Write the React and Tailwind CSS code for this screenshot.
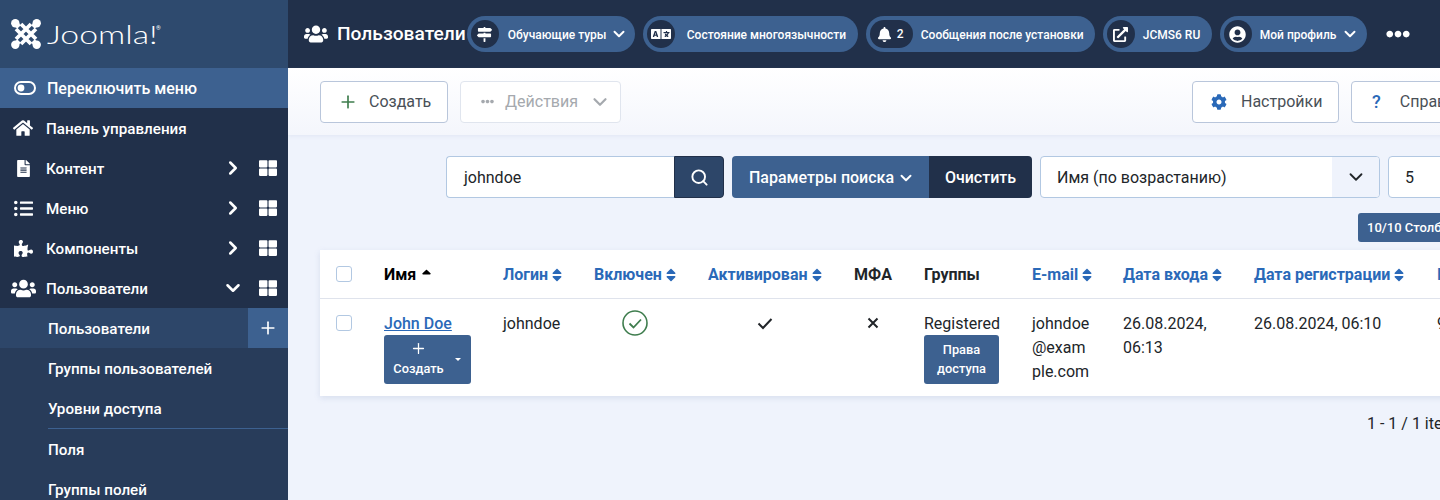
import { ChevronDown, ChevronRight, Plus, Search } from "lucide-react";
import {
  FaBell,
  FaCog,
  FaEllipsisH,
  FaExternalLinkAlt,
  FaFileAlt,
  FaHome,
  FaLanguage,
  FaListUl,
  FaMapSigns,
  FaPuzzlePiece,
  FaSort,
  FaSortUp,
  FaThLarge,
  FaUserCircle,
  FaUsers,
} from "react-icons/fa";

function JoomlaLogo() {
  return (
    <div className="flex items-center h-[68px] shrink-0 pl-[11px] bg-[#2e4a6e]">
      <svg width="30" height="30" viewBox="0 0 30 30" fill="none" stroke="white" strokeWidth="3.8">
        <path d="M10 5 L25 20 M5 10 L20 25 M20 5 L5 20 M25 10 L10 25" />
        <path d="M4 4 L8 8 M26 4 L22 8 M4 26 L8 22 M26 26 L22 22" strokeWidth="5" />
        <g fill="white" stroke="none">
          <circle cx="4.3" cy="4.3" r="4.2" />
          <circle cx="25.7" cy="4.3" r="4.2" />
          <circle cx="4.3" cy="25.7" r="4.2" />
          <circle cx="25.7" cy="25.7" r="4.2" />
        </g>
      </svg>
      <span className="block w-[108px] ml-[6px] origin-left scale-x-[1.3] font-[family-name:Lato] font-light text-[26px] leading-none text-white">
        Joomla!
      </span>
      <span className="self-start mt-[25px] ml-[1px] text-[6px] leading-none text-white">®</span>
    </div>
  );
}

function NavRow({ icon, label, open, more }) {
  return (
    <div className="flex items-center h-10 shrink-0 pl-[13px] pr-[11px] text-white text-[15.2px] font-medium bg-[#21304a]">
      <span className="flex justify-center w-5 mr-[13px] text-[19px]">{icon}</span>
      <span className="pt-[2px]">{label}</span>
      {more && (
        <>
          <span className="ml-auto mr-[15px]">
            {open ? (
              <ChevronDown size={22} strokeWidth={2.8} />
            ) : (
              <ChevronRight size={22} strokeWidth={2.8} />
            )}
          </span>
          <FaThLarge size={18} />
        </>
      )}
    </div>
  );
}

function SubRow({ label, active }) {
  return (
    <div className={active ? "flex items-center h-10 shrink-0 pl-12 bg-[#2d4669] text-white text-[15.2px] font-medium" : "flex items-center h-10 shrink-0 pl-12 text-white text-[15.2px] font-medium"}>
      <span className="pt-[2px]">{label}</span>
      {active && (
        <span className="ml-auto flex items-center justify-center w-10 h-10 bg-[#3d6190]">
          <Plus size={20} strokeWidth={2} />
        </span>
      )}
    </div>
  );
}

function Sidebar() {
  return (
    <aside className="flex flex-col w-[288px] h-[500px] shrink-0 overflow-hidden bg-[#283c5a]">
      <JoomlaLogo />
      <div className="flex items-center h-10 shrink-0 pl-[14px] bg-[#3d6190] text-white text-[16px] font-medium">
        <svg width="22" height="14" viewBox="0 0 22 14" fill="none" className="mr-[11px]">
          <rect x="1" y="1" width="20" height="12" rx="6" stroke="white" strokeWidth="2" />
          <circle cx="7" cy="7" r="3.4" fill="white" />
        </svg>
        <span className="pt-px">Переключить меню</span>
      </div>
      <NavRow icon={<FaHome className="text-[20px]" />} label="Панель управления" />
      <NavRow icon={<FaFileAlt className="text-[17px]" />} label="Контент" more />
      <NavRow icon={<FaListUl />} label="Меню" more />
      <NavRow icon={<FaPuzzlePiece />} label="Компоненты" more />
      <NavRow icon={<FaUsers className="text-[25px] shrink-0" />} label="Пользователи" more open />
      <SubRow label="Пользователи" active />
      <SubRow label="Группы пользователей" />
      <SubRow label="Уровни доступа" />
      <div className="ml-12 h-px shrink-0 bg-[#3d6190]" />
      <SubRow label="Поля" />
      <SubRow label="Группы полей" />
    </aside>
  );
}

function Pill({ children, className }) {
  return (
    <div className={"flex items-center h-9 shrink-0 rounded-full bg-[#3d6190] pl-1 text-white text-xs font-medium " + className}>
      {children}
    </div>
  );
}

function PillIcon({ children }) {
  return (
    <span className="flex items-center justify-center w-7 h-7 rounded-full bg-[#21304a] text-[15px]">
      {children}
    </span>
  );
}

function Header() {
  return (
    <header className="flex items-center h-[68px] pl-4 bg-[#21304a] text-white">
      <FaUsers className="text-[24px] mr-[9px] shrink-0" />
      <h1 className="text-[19.2px] font-medium mr-px shrink-0">Пользователи</h1>
      <div className="flex items-center gap-2">
        <Pill className="w-[168px]">
          <PillIcon><FaMapSigns /></PillIcon>
          <span className="ml-[9px] pt-px">Обучающие туры</span>
          <ChevronDown size={18} strokeWidth={2.6} className="ml-1" />
        </Pill>
        <Pill className="w-[215px]">
          <PillIcon><FaLanguage className="text-[20px]" /></PillIcon>
          <span className="ml-3 pt-px">Состояние многоязычности</span>
        </Pill>
        <Pill className="w-[229px]">
          <span className="flex items-center h-7 w-[43px] pl-[7px] rounded-full bg-[#21304a] text-[15px]">
            <FaBell />
            <span className="ml-[5px] text-xs">2</span>
          </span>
          <span className="ml-2 pt-px">Сообщения после установки</span>
        </Pill>
        <Pill className="w-[109px]">
          <PillIcon><FaExternalLinkAlt /></PillIcon>
          <span className="ml-2 pt-px">JCMS6 RU</span>
        </Pill>
        <Pill className="w-[147px]">
          <PillIcon><FaUserCircle className="text-[17px]" /></PillIcon>
          <span className="ml-2 pt-px">Мой профиль</span>
          <ChevronDown size={18} strokeWidth={2.6} className="ml-[5px]" />
        </Pill>
        <FaEllipsisH className="ml-[11px] text-[24px]" />
      </div>
    </header>
  );
}

function Toolbar() {
  return (
    <div className="flex items-center h-[67px] w-[1183px] pl-8 bg-gradient-to-b from-white to-[#f4f6fc] shadow-[0_1px_4px_rgba(120,140,180,0.12)] text-[16px] text-[#495057]">
      <button className="flex items-center shrink-0 w-[128px] h-[42px] pl-[17px] bg-white border border-[#b9c6db] rounded-[4px]">
        <Plus size={20} strokeWidth={2} className="text-[#3f7d4e]" />
        <span className="ml-[11px]">Создать</span>
      </button>
      <button className="flex items-center shrink-0 w-[161px] h-[42px] ml-3 pl-[20px] bg-white border border-[#e0e5ee] rounded-[4px] text-[#a5a9ae]">
        <FaEllipsisH className="text-[13px]" />
        <span className="ml-[11px]">Действия</span>
        <ChevronDown size={22} strokeWidth={2.4} className="ml-[11px]" />
      </button>
      <button className="flex items-center shrink-0 w-[147px] h-[42px] ml-auto pl-[18px] bg-white border border-[#b9c6db] rounded-[4px]">
        <FaCog className="text-[16px] text-[#2a69b8]" />
        <span className="ml-[14px]">Настройки</span>
      </button>
      <button className="flex items-center shrink-0 w-[120px] h-[42px] ml-3 pl-[20px] bg-white border border-[#b9c6db] rounded-[4px]">
        <span className="text-[18px] font-medium text-[#2a69b8]">?</span>
        <span className="ml-[19px]">Справка</span>
      </button>
    </div>
  );
}

function Filters() {
  return (
    <div className="flex items-stretch h-[42px] mt-[21px] pl-[158px] text-[16px]">
      <div className="flex items-center shrink-0 w-[228px] pl-[17px] pt-px bg-white border border-[#b2c8e2] border-r-0 rounded-l-[4px] text-[#212529]">
        johndoe
      </div>
      <button className="flex items-center justify-center shrink-0 w-[50px] bg-[#2d4669] border border-[#21304a] rounded-r-[4px] text-white">
        <Search size={19} strokeWidth={2.4} />
      </button>
      <div className="flex shrink-0 ml-2 text-white font-medium rounded-[4px] overflow-hidden">
        <button className="flex items-center w-[197px] pl-[17px] pt-px bg-[#3d6190]">
          Параметры поиска
          <ChevronDown size={18} strokeWidth={2.6} className="ml-[3px]" />
        </button>
        <button className="w-[103px] pt-px bg-[#21304a]">Очистить</button>
      </div>
      <div className="flex items-center justify-between shrink-0 w-[340px] ml-2 bg-white border border-[#b2c8e2] rounded-[4px] overflow-hidden text-[#212529]">
        <span className="pl-4 pt-px">Имя (по возрастанию)</span>
        <span className="flex items-center justify-center w-[47px] h-full bg-[#eff3fc]">
          <ChevronDown size={22} strokeWidth={2} />
        </span>
      </div>
      <div className="flex items-center justify-between shrink-0 w-[120px] ml-2 bg-white border border-[#b2c8e2] rounded-[4px] overflow-hidden text-[#212529]">
        <span className="pl-4 pt-px">5</span>
        <span className="w-[47px] h-full bg-[#eff3fc]" />
      </div>
    </div>
  );
}

function Th({ children, sort, className }) {
  return (
    <th className={"px-4 pt-[2px] font-bold text-[16px] " + (sort ? "text-[#2a69b8] " : "text-[#212529] ") + className}>
      {children}
      {sort && <FaSort className="inline-block ml-px -mt-[2px] text-[16px]" />}
    </th>
  );
}

function Checkbox() {
  return <span className="block w-4 h-4 bg-white border border-[#b2c8e2] rounded-[3px]" />;
}

function UsersTable() {
  return (
    <div className="ml-8 mt-2 w-[1240px] bg-white shadow-[0_2px_6px_rgba(120,140,180,0.2)]">
      <table className="table-fixed w-full border-collapse text-[16px] text-[#212529]">
        <colgroup>
          <col className="w-[48px]" />
          <col className="w-[119px]" />
          <col className="w-[91px]" />
          <col className="w-[114px]" />
          <col className="w-[146px]" />
          <col className="w-[70px]" />
          <col className="w-[108px]" />
          <col className="w-[91px]" />
          <col className="w-[131px]" />
          <col className="w-[183px]" />
          <col />
        </colgroup>
        <thead>
          <tr className="h-12 border-b border-[#dfe3ec] text-left whitespace-nowrap">
            <th className="pl-4"><Checkbox /></th>
            <th className="px-4 pt-[2px] font-bold text-[16px] text-black">
              Имя
              <FaSortUp className="inline-block ml-[3px] text-[15px]" />
            </th>
            <Th sort>Логин</Th>
            <Th sort className="text-center">Включен</Th>
            <Th sort className="text-center">Активирован</Th>
            <Th className="text-center">МФА</Th>
            <Th>Группы</Th>
            <Th sort>E-mail</Th>
            <Th sort>Дата входа</Th>
            <Th sort>Дата регистрации</Th>
            <Th sort>ID</Th>
          </tr>
        </thead>
        <tbody>
          <tr className="align-top leading-6">
            <td className="pl-4 pt-4"><Checkbox /></td>
            <td className="px-4 pt-[13px] pb-3">
              <a className="font-medium text-[#2a69b8] underline">John Doe</a>
              <div className="flex items-center w-[87px] h-[49px] -mt-px rounded-[3px] bg-[#3d6190] text-white text-[12.8px] font-medium">
                <div className="flex flex-col items-center w-[68px] pl-[1px]">
                  <Plus size={17} strokeWidth={1.8} />
                  <span className="mt-[2px] leading-[19px]">Создать</span>
                </div>
                <span className="ml-[3px] w-0 h-0 border-x-[3px] border-x-transparent border-t-[3px] border-t-white" />
              </div>
            </td>
            <td className="px-4 pt-[13px] pb-3">johndoe</td>
            <td className="px-4 py-3">
              <svg width="26" height="26" viewBox="0 0 26 26" fill="none" stroke="#3f7d4e" className="mx-auto -mt-px">
                <circle cx="13" cy="13" r="12" strokeWidth="1.6" />
                <path d="M7.5 13.5 L11.5 17.5 L19 9.5" strokeWidth="1.8" />
              </svg>
            </td>
            <td className="px-4 py-3">
              <svg width="16" height="24" viewBox="0 0 16 24" fill="none" stroke="#212529" strokeWidth="2" className="mx-auto">
                <path d="M1.5 12.5 L6 17 L14.5 8" />
              </svg>
            </td>
            <td className="px-4 py-3">
              <svg width="12" height="24" viewBox="0 0 12 24" fill="none" stroke="#212529" strokeWidth="2" className="mx-auto">
                <path d="M1.5 7.5 L10.5 16.5 M10.5 7.5 L1.5 16.5" />
              </svg>
            </td>
            <td className="px-4 pt-[13px] pb-3">
              Registered
              <div className="flex items-center justify-center w-[75px] h-[49px] -mt-px rounded-[3px] bg-[#3d6190] text-white text-[12.8px] font-medium leading-[19px] text-center">
                Права<br />доступа
              </div>
            </td>
            <td className="px-4 pt-[13px] pb-3">
              johndoe<br />@exam<br />ple.com
            </td>
            <td className="px-4 pt-[13px] pb-3">26.08.2024,<br />06:13</td>
            <td className="px-4 pt-[13px] pb-3 whitespace-nowrap">26.08.2024, 06:10</td>
            <td className="px-4 pt-[13px] pb-3">9</td>
          </tr>
        </tbody>
      </table>
    </div>
  );
}

export default function App() {
  return (
    <div className="flex w-[1440px] h-[500px] overflow-hidden bg-[#eff3fc] font-[family-name:Roboto,sans-serif]">
      <Sidebar />
      <main className="flex-1 min-w-0 overflow-hidden">
        <Header />
        <Toolbar />
        <Filters />
        <div className="flex justify-start h-[29px] mt-[15px] pl-[1070px]">
          <button className="shrink-0 w-[130px] pl-[9px] text-left rounded-[3px] bg-[#3d6190] text-white text-[13px] font-medium whitespace-nowrap">
            10/10 Столбцы
          </button>
        </div>
        <UsersTable />
        <div className="mt-4 pl-[1079px] text-[16px] text-[#212529] whitespace-nowrap">
          1 - 1 / 1 items
        </div>
      </main>
    </div>
  );
}
